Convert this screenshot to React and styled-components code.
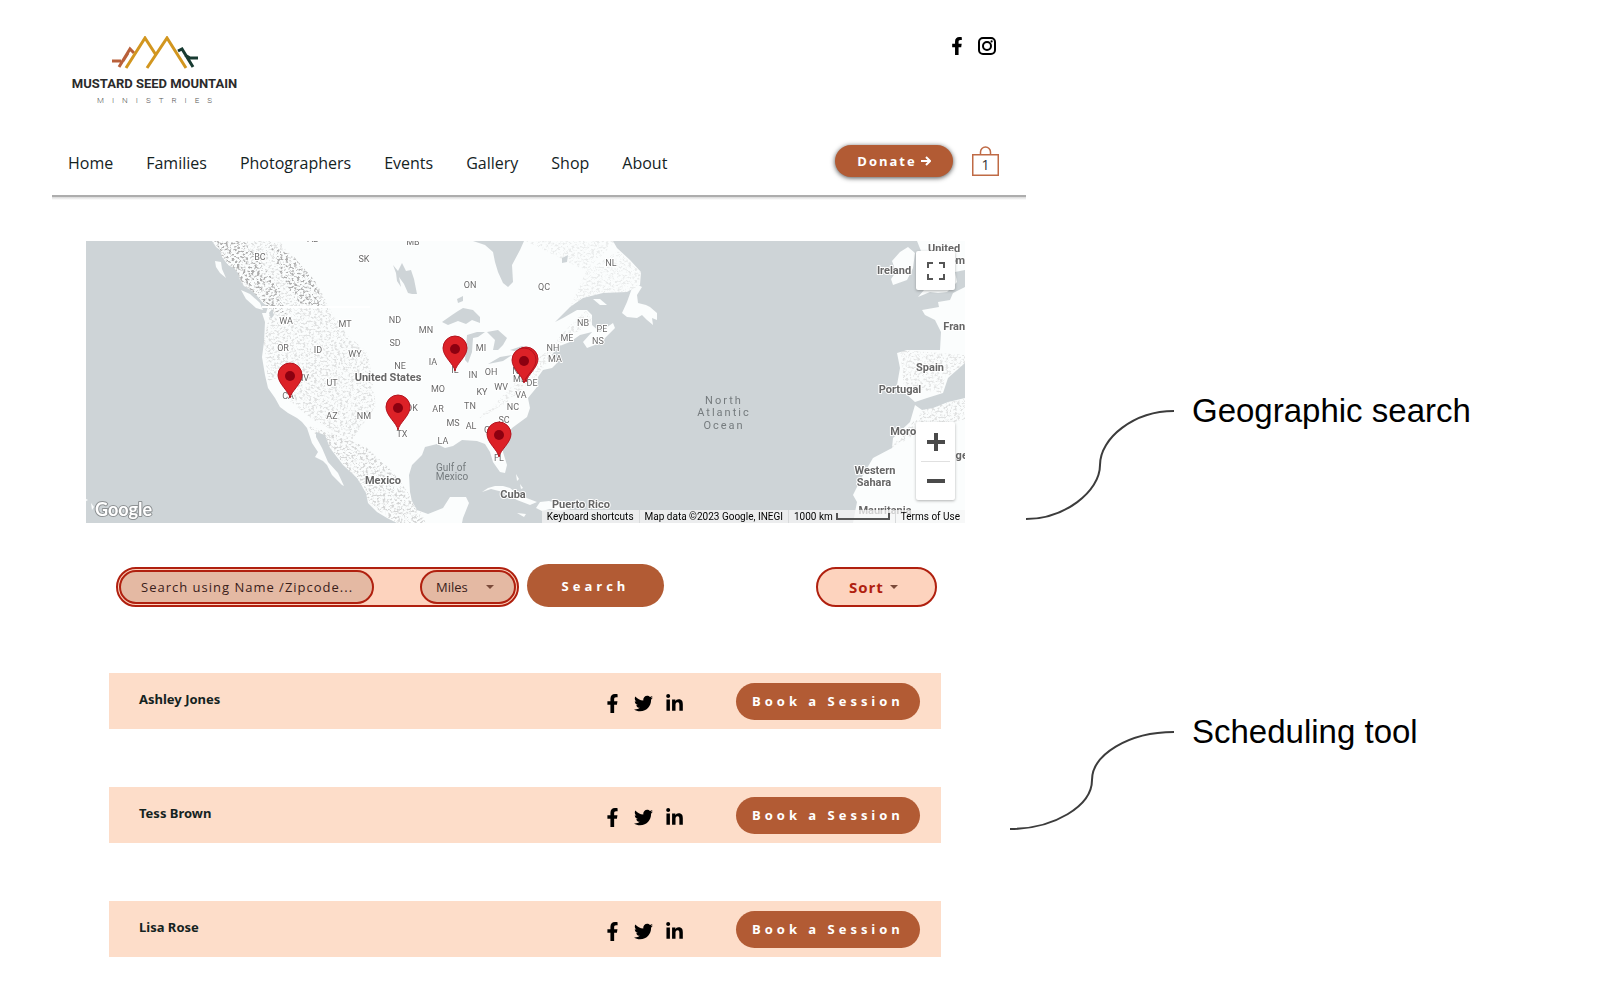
import React from "react";
import styled, { createGlobalStyle } from "styled-components";
import { FaFacebookF, FaTwitter, FaLinkedinIn } from "react-icons/fa";

const colors = {
  rust: "#b25b34",
  red: "#b0200f",
  peach: "#fdd3be",
  peachDark: "#e4b9a3",
  row: "#fdddc9",
  ink: "#14231f",
  mustard: "#d2961f",
  water: "#ced4d7",
  land: "#fbfdfd",
};

const GlobalStyle = createGlobalStyle`
  * {
    box-sizing: border-box;
  }
  body {
    margin: 0;
    background: #fff;
    color: ${colors.ink};
    font-family: "Open Sans", "Noto Sans", sans-serif;
  }
  a {
    color: inherit;
    text-decoration: none;
  }
  button, select, input {
    font-family: inherit;
    margin: 0;
    cursor: pointer;
  }
`;

const Page = styled.div`
  display: grid;
  grid-template-columns: minmax(0, 974fr) minmax(0, 583fr);
  padding-left: 52px;
`;

/* header */

const Header = styled.header`
  padding: 36px 27px 0 16px;
  &:after {
    content: "";
    display: block;
    height: 5px;
    margin: 18px -27px 0 -16px;
    background: linear-gradient(#adadad 0 2px, #d8d8d8 2px, #fff);
  }
`;

const HeaderTop = styled.div`
  display: flex;
  justify-content: space-between;
  align-items: flex-start;
  height: 68px;
`;

const Logo = styled.a`
  display: flex;
  flex-direction: column;
  align-items: center;
  width: 173px;
  color: #2b2b2b;
  white-space: nowrap;
  svg {
    display: block;
  }
`;

const LogoName = styled.span`
  font-family: Roboto, sans-serif;
  font-size: 13px;
  font-weight: 700;
  line-height: 28px;
`;

const LogoTagline = styled.span`
  font-family: Roboto, sans-serif;
  font-size: 8px;
  font-weight: 300;
  line-height: 6px;
  letter-spacing: 8px;
  padding-left: 8px;
  color: #555;
`;

const Social = styled.div`
  display: flex;
  align-items: center;
  gap: 12px;
  color: #000;
  a {
    display: flex;
  }
`;

const HeaderSocial = styled(Social)`
  padding: 1px 3px 0 0;
`;

const HeaderBottom = styled.div`
  display: flex;
  align-items: center;
  height: 32px;
  margin-top: 41px;
`;

const Nav = styled.nav`
  display: flex;
  flex: 1;
  gap: 33px;
  padding-top: 4px;
  font-size: 16px;
  line-height: 24px;
`;

const PillButton = styled.button`
  display: flex;
  align-items: center;
  justify-content: center;
  flex: none;
  width: ${(props) => props.$width};
  height: ${(props) => props.$height};
  padding: 0;
  border: 0;
  border-radius: 22px;
  background: ${colors.rust};
  color: #fff;
  font-size: 13px;
  font-weight: 700;
  letter-spacing: 4px;
  white-space: nowrap;
`;

const DonateButton = styled(PillButton)`
  gap: 4px;
  letter-spacing: 2px;
  box-shadow: 0 1px 5px rgba(0, 0, 0, 0.7);
`;

const Bag = styled.a`
  display: flex;
  margin-left: 19px;
`;

/* map */

const MapFrame = styled.section`
  position: relative;
  height: 282px;
  margin: 41px 61px 0 34px;
  overflow: hidden;
  background: ${colors.water};
`;

const MapDrawing = styled.svg`
  display: block;
  width: 100%;
  height: 100%;
  font-family: Roboto, sans-serif;
  text {
    text-anchor: middle;
    paint-order: stroke;
    stroke: #fff;
    stroke-width: 2px;
    stroke-linejoin: round;
    fill: #6b6b6b;
    font-size: 9px;
  }
  .country {
    font-size: 11px;
    font-weight: 700;
    fill: #666;
  }
  .sea {
    stroke: none;
    fill: #757b7e;
    font-size: 10px;
  }
  .ocean {
    stroke: none;
    fill: #757b7e;
    font-size: 11px;
    letter-spacing: 2px;
  }
  .google {
    font-family: Lato, sans-serif;
    font-size: 18px;
    font-weight: 700;
    fill: #fff;
    stroke: #8d9193;
    text-anchor: start;
  }
`;

const MapControl = styled.div`
  position: absolute;
  right: 10px;
  ${(props) => (props.$top ? "top: 10px;" : "bottom: 23px;")}
  width: 39px;
  padding: 0 5px;
  background: #fff;
  border-radius: 2px;
  box-shadow: 0 1px 3px rgba(0, 0, 0, 0.3);
`;

const MapButton = styled.button`
  display: flex;
  align-items: center;
  justify-content: center;
  width: 29px;
  height: 39px;
  padding: 0;
  border: 0;
  background: none;
  & + & {
    border-top: 1px solid #e0e0e0;
  }
`;

const Attribution = styled.div`
  position: absolute;
  right: 0;
  bottom: 0;
  display: flex;
  height: 13px;
  background: rgba(245, 245, 245, 0.75);
  font-family: Roboto, sans-serif;
  font-size: 10px;
  line-height: 14px;
  color: #000;
  white-space: nowrap;
  > * {
    display: flex;
    align-items: center;
    gap: 3px;
    padding: 0 5px;
  }
  > * + * {
    border-left: 1px solid #d8dadb;
  }
`;

/* search */

const SearchBar = styled.form`
  display: flex;
  align-items: flex-end;
  margin: 41px 89px 0 64px;
`;

const SearchField = styled.div`
  display: flex;
  justify-content: space-between;
  width: 403px;
  height: 40px;
  padding: 1px;
  margin-right: 8px;
  border: 2px solid ${colors.red};
  border-radius: 20px;
  background: ${colors.peach};
`;

const SearchInput = styled.input`
  width: 255px;
  height: 34px;
  padding: 0 20px;
  border: 2px solid ${colors.red};
  border-radius: 17px;
  background: ${colors.peachDark};
  font-size: 13px;
  letter-spacing: 1px;
  &::placeholder {
    color: #3a201a;
    opacity: 1;
  }
`;

const SelectBox = styled.div`
  position: relative;
  flex: none;
  width: ${(props) => props.$width};
  svg {
    position: absolute;
    top: 50%;
    right: ${(props) => props.$caretRight};
    margin-top: -2px;
    pointer-events: none;
  }
`;

const Select = styled.select`
  appearance: none;
  display: block;
  width: 100%;
  height: 34px;
  padding: 0 0 0 14px;
  border: 2px solid ${colors.red};
  border-radius: 17px;
  background: ${colors.peachDark};
  color: #3a201a;
  font-size: 13px;
`;

const SortSelect = styled(Select)`
  height: 40px;
  padding: 0 0 0 31px;
  border-radius: 20px;
  background: ${colors.peach};
  color: ${colors.red};
  font-size: 15px;
  font-weight: 700;
  letter-spacing: 1px;
`;

const Spacer = styled.div`
  flex: 1;
`;

/* photographers */

const List = styled.ul`
  display: flex;
  flex-direction: column;
  gap: 58px;
  margin: 66px 85px 38px 57px;
  padding: 0;
  list-style: none;
`;

const Row = styled.li`
  display: flex;
  align-items: center;
  height: 56px;
  padding: 0 21px 0 30px;
  background: ${colors.row};
`;

const Name = styled.h3`
  flex: 1;
  margin: 0;
  padding-bottom: 4px;
  font-family: "Noto Sans", sans-serif;
  font-size: 13px;
  line-height: 20px;
`;

const RowSocial = styled(Social)`
  margin-right: 52px;
  padding-top: 4px;
`;

/* callouts */

const Callouts = styled.aside`
  display: flex;
  flex-direction: column;
  gap: 192px;
  padding-top: 391px;
`;

const Callout = styled.div`
  display: flex;
  align-items: flex-start;
  gap: 18px;
  margin-left: ${(props) => (props.$wide ? "-16px" : "0")};
  svg {
    flex: none;
    margin-top: 19px;
  }
`;

const CalloutText = styled.h2`
  margin: 0;
  color: #000;
  font-family: "Liberation Sans", sans-serif;
  font-size: 33px;
  font-weight: 400;
  line-height: 40px;
  white-space: nowrap;
`;

const states = [
  ["BC", 174, 19], ["SK", 278, 21], ["MB", 327, 4], ["AB", 227, 1], ["WA", 200, 83],
  ["MT", 259, 86], ["OR", 197, 110], ["ID", 232, 112], ["WY", 269, 116],
  ["NV", 217, 140], ["UT", 246, 145], ["CA", 202, 158], ["AZ", 246, 178],
  ["NM", 278, 178], ["ND", 309, 82], ["SD", 309, 105], ["NE", 314, 128],
  ["MN", 340, 92], ["IA", 347, 124], ["MO", 352, 151], ["OK", 326, 170],
  ["TX", 316, 196], ["AR", 352, 171], ["MS", 367, 185], ["AL", 385, 188],
  ["LA", 357, 203], ["IL", 369, 132], ["IN", 387, 137], ["OH", 405, 134],
  ["MI", 395, 110], ["KY", 396, 154], ["TN", 384, 168], ["WV", 415, 149],
  ["VA", 435, 157], ["NC", 427, 169], ["SC", 418, 182], ["GA", 404, 192],
  ["FL", 413, 220], ["MD", 434, 141], ["DE", 446, 145], ["MA", 469, 121],
  ["NH", 467, 110], ["ME", 481, 100], ["NB", 497, 85], ["PE", 516, 91],
  ["NS", 512, 103], ["ON", 384, 47], ["QC", 458, 49], ["NL", 525, 25],
  ["NY", 432, 133],
];

const countries = [
  ["United States", 302, 140], ["Mexico", 297, 243], ["Cuba", 427, 257],
  ["Puerto Rico", 495, 267], ["Ireland", 808, 33], ["United", 858, 11],
  ["Kingdom", 857, 23], ["France", 874, 89], ["Spain", 844, 130],
  ["Portugal", 814, 152], ["Morocco", 826, 194], ["Algeria", 877, 218],
  ["Western", 789, 233], ["Sahara", 788, 245], ["Mauritania", 799, 273],
];

const pins = [
  [204, 157],
  [369, 130],
  [312, 189],
  [413, 216],
  [440, 141],
  [438, 142],
];

const photographers = ["Ashley Jones", "Tess Brown", "Lisa Rose"];

const americas =
  "M126 0 L130 6 134 9 136 16 142 24 148 27 152 32 154 39 158 45 166 50 172 56 176 61 182 66 180 72 176 72 179 81 178 101 176 116 179 134 182 147 189 157 194 166 202 172 211 177 216 181 221 187 226 202 232 211 229 216 237 220 241 224 246 234 256 244 258 245 252 232 242 221 236 207 230 196 230 191 239 194 244 207 257 224 271 237 280 252 282 262 291 271 301 277 311 282 L376 282 377 277 383 262 380 256 364 256 357 267 342 273 331 269 326 260 324 251 323 234 326 224 336 214 339 206 351 203 359 207 367 205 376 199 391 200 399 203 404 211 407 221 414 231 419 232 421 224 417 211 417 201 426 187 441 176 444 167 442 157 451 146 452 136 457 129 466 127 471 122 466 114 471 106 484 101 494 94 506 91 497 101 501 107 514 102 529 87 527 82 514 91 506 84 506 74 501 69 491 69 477 77 469 81 484 66 497 57 517 52 541 51 554 44 555 31 544 19 531 7 527 0 Z";

const europe =
  "M879 46 L867 52 864 59 852 61 853 66 836 69 839 74 849 79 855 91 854 109 837 109 821 109 811 112 814 127 811 144 819 152 829 161 841 157 857 152 862 137 879 122 Z";

const africa =
  "M829 164 L836 169 847 167 862 161 879 157 V282 H767 L771 261 767 254 777 234 787 217 806 207 807 197 824 181 Z";

function Pin({ x, y }) {
  return (
    <g transform={`translate(${x} ${y})`}>
      <path
        d="M0 0 C-1 -7 -12 -14 -12 -23 A12 12 0 0 1 12 -23 C12 -14 1 -7 0 0 Z"
        fill="#dc2127"
        stroke="#b3121d"
      />
      <circle cy="-22" r="5" fill="#8c0010" />
    </g>
  );
}

function Map() {
  return (
    <MapFrame aria-label="Map of photographers">
      <MapDrawing viewBox="0 0 879 282" preserveAspectRatio="xMidYMid slice">
        <defs>
          <filter id="relief" x="0" y="0" width="100%" height="100%">
            <feTurbulence type="fractalNoise" baseFrequency="0.35 0.5" numOctaves="4" seed="4" />
            <feColorMatrix values="0 0 0 0 0.42  0 0 0 0 0.42  0 0 0 0 0.42  5 0 0 0 -2.4" />
            <feComposite in2="SourceGraphic" operator="in" />
          </filter>
          <clipPath id="land">
            <path d={`${americas} ${europe} ${africa}`} />
          </clipPath>
        </defs>
        <g fill={colors.land}>
          <path d={americas} />
          <path d={europe} />
          <path d={africa} />
          <path d="M129 20 L135 21 136 28 140 37 134 32 130 26 Z" />
          <path d="M155 49 L164 53 174 62 177 69 170 67 160 58 Z" />
          <path d="M552 44 L546 47 541 61 536 72 541 76 551 77 556 74 561 79 567 84 566 77 571 79 571 72 564 66 560 64 552 62 551 54 556 46 Z" />
          <path d="M507 58 L514 58 521 64 514 64 Z" />
          <path d="M396 251 L402 247 409 245 417 245 424 247 430 252 438 256 451 261 444 264 431 259 417 251 405 248 Z" />
          <path d="M454 261 L463 260 474 263 484 268 474 270 464 268 456 270 450 267 Z M431 272 L440 273 438 276 Z" />
          <path d="M430 233 L433 238 431 240 Z M434 243 L437 247 435 248 Z" />
          <path d="M806 20 L814 11 822 6 829 12 827 27 821 39 807 44 805 38 810 31 Z" />
          <path d="M831 0 L835 10 842 17 836 28 844 40 838 49 832 56 844 51 852 52 861 51 871 41 869 31 879 29 V0 Z" />
          <path d="M5 262 L8 266 6 269 Z M0 258 L2 259 0 260 Z" />
        </g>
        <g clipPath="url(#land)">
          <g filter="url(#relief)">
            <path d="M126 0 H193 L213 22 234 48 246 72 262 95 282 112 290 165 265 200 226 178 204 160 205 132 182 140 178 100 184 70 152 36 Z" opacity="0.35" />
            <path d="M126 0 H158 L176 24 194 48 200 74 176 66 148 36 Z M184 4 L208 16 229 40 238 66 212 62 196 36 Z" />
            <path d="M222 185 L246 192 280 206 306 230 330 262 340 282 H308 L284 262 262 228 Z" opacity="0.5" />
            <path d="M386 182 L410 162 440 130 466 104 488 80 500 70 508 80 480 98 448 138 420 162 Z" opacity="0.25" />
            <path d="M484 66 L500 30 532 10 556 32 550 48 Z M440 0 H530 L500 30 Z" opacity="0.2" />
            <path d="M814 109 L879 114 V126 L860 136 855 152 818 146 Z" opacity="0.3" />
            <path d="M804 208 L828 180 840 166 879 158 V178 L836 190 Z" opacity="0.35" />
          </g>
        </g>
        <g fill={colors.water}>
          <path d="M387 0 L399 4 407 11 409 21 412 31 417 42 422 46 427 41 426 24 434 9 438 0 Z" />
          <path d="M356 81 L366 74 372 70 377 67 387 69 394 76 394 82 386 79 380 83 372 80 362 84 Z" />
          <path d="M381 94 L391 91 399 91 392 96 387 97 386 111 382 122 379 119 Z" />
          <path d="M401 91 L412 89 421 97 417 104 412 109 407 109 409 99 Z" />
          <path d="M402 123 L414 116 426 114 417 120 Z M424 109 L436 105 442 107 432 111 Z" />
          <path d="M307 24 L310 32 311 40 315 46 313 36 318 43 322 52 326 53 331 53 328 38 325 29 320 30 316 22 312 30 Z" />
          <path d="M186 68 L188 74 185 78 183 72 Z M371 58 L377 55 377 60 372 62 Z M476 17 L482 14 481 21 476 22 Z" />
        </g>
        <path d="M176 66 H284" stroke="#fff" strokeWidth="2" />
        {states.map(([name, x, y]) => (
          <text key={name} x={x} y={y}>{name}</text>
        ))}
        {countries.map(([name, x, y]) => (
          <text key={name} className="country" x={x} y={y}>{name}</text>
        ))}
        <text className="sea" x="365" y="230">Gulf of</text>
        <text className="sea" x="366" y="239">Mexico</text>
        <text className="ocean" x="638" y="163">North</text>
        <text className="ocean" x="638" y="175">Atlantic</text>
        <text className="ocean" x="638" y="188">Ocean</text>
        <text className="google" x="9" y="275">Google</text>
        {pins.map(([x, y]) => (
          <Pin key={x} x={x} y={y} />
        ))}
      </MapDrawing>
      <MapControl $top>
        <MapButton type="button" aria-label="Toggle fullscreen view">
          <svg width="18" height="18" fill="none" stroke="#555" strokeWidth="2">
            <path d="M1 6 V1 H6 M12 1 H17 V6 M17 12 V17 H12 M6 17 H1 V12" />
          </svg>
        </MapButton>
      </MapControl>
      <MapControl>
        <MapButton type="button" aria-label="Zoom in">
          <svg width="18" height="18" stroke="#4a4a4a" strokeWidth="4">
            <path d="M0 9 H18 M9 0 V18" />
          </svg>
        </MapButton>
        <MapButton type="button" aria-label="Zoom out">
          <svg width="18" height="18" stroke="#4a4a4a" strokeWidth="4">
            <path d="M0 9 H18" />
          </svg>
        </MapButton>
      </MapControl>
      <Attribution>
        <a href="#shortcuts">Keyboard shortcuts</a>
        <span>Map data ©2023 Google, INEGI</span>
        <span>
          1000 km
          <svg width="54" height="7" fill="none" stroke="#555" strokeWidth="2">
            <path d="M1 0 V6 H53 V0" />
          </svg>
        </span>
        <a href="#terms">Terms of Use</a>
      </Attribution>
    </MapFrame>
  );
}

function Caret() {
  return (
    <svg width="8" height="4" fill="#7a4a3a">
      <path d="M0 0 H8 L4 4 Z" />
    </svg>
  );
}

function SiteHeader() {
  return (
    <Header>
      <HeaderTop>
        <Logo href="#home">
          <svg width="86" height="34" viewBox="0 0 86 34" fill="none" strokeWidth="3">
            <path d="M0 25 H9 M7 31 L18 13 L22 17 M11 25 L16 17" stroke="#b9603a" />
            <path d="M66 15 L70 13 L81 31 M73 19 L78 22 H86" stroke="#173a31" />
            <path d="M14 32 L33 2 L44 19 M35 32 L55 2 L74 32" stroke={colors.mustard} />
          </svg>
          <LogoName>MUSTARD SEED MOUNTAIN</LogoName>
          <LogoTagline>MINISTRIES</LogoTagline>
        </Logo>
        <HeaderSocial>
          <a href="#facebook" aria-label="Facebook"><FaFacebookF size={18} /></a>
          <a href="#instagram" aria-label="Instagram">
            <svg width="18" height="18" fill="none" stroke="#000" strokeWidth="2">
              <rect x="1" y="1" width="16" height="16" rx="4" />
              <circle cx="9" cy="9" r="4" />
              <circle cx="13.6" cy="4.4" r="1.1" fill="#000" stroke="none" />
            </svg>
          </a>
        </HeaderSocial>
      </HeaderTop>
      <HeaderBottom>
        <Nav>
          {["Home", "Families", "Photographers", "Events", "Gallery", "Shop", "About"].map((item) => (
            <a key={item} href={`#${item.toLowerCase()}`}>{item}</a>
          ))}
        </Nav>
        <DonateButton type="button" $width="118px" $height="32px">
          Donate
          <svg width="10" height="10" fill="none" stroke="#fff" strokeWidth="2">
            <path d="M0 5 H9 M5 1 L9 5 L5 9" />
          </svg>
        </DonateButton>
        <Bag href="#cart" aria-label="Cart, 1 item">
          <svg width="27" height="30" fill="none" stroke="#bf6a45">
            <rect x="0.75" y="8.75" width="25.5" height="20.5" strokeWidth="1.5" />
            <path d="M8.5 8 V6 A5 5 0 0 1 18.5 6 V8" strokeWidth="1.5" />
            <text x="13.5" y="24" textAnchor="middle" fontSize="14" fill="#333" stroke="none">1</text>
          </svg>
        </Bag>
      </HeaderBottom>
    </Header>
  );
}

function App() {
  return (
    <>
      <GlobalStyle />
      <Page>
        <main>
          <SiteHeader />
          <Map />
          <SearchBar onSubmit={(e) => e.preventDefault()}>
            <SearchField>
              <SearchInput
                type="text"
                aria-label="Search using name or zipcode"
                placeholder="Search using Name /Zipcode..."
              />
              <SelectBox $width="96px" $caretRight="22px">
                <Select aria-label="Distance">
                  <option>Miles</option>
                </Select>
                <Caret />
              </SelectBox>
            </SearchField>
            <PillButton type="submit" $width="137px" $height="43px">Search</PillButton>
            <Spacer />
            <SelectBox $width="121px" $caretRight="39px">
              <SortSelect aria-label="Sort">
                <option>Sort</option>
              </SortSelect>
              <Caret />
            </SelectBox>
          </SearchBar>
          <List>
            {photographers.map((name) => (
              <Row key={name}>
                <Name>{name}</Name>
                <RowSocial>
                  <a href="#facebook" aria-label="Facebook"><FaFacebookF size={19} /></a>
                  <a href="#twitter" aria-label="Twitter"><FaTwitter size={19} /></a>
                  <a href="#linkedin" aria-label="LinkedIn"><FaLinkedinIn size={19} /></a>
                </RowSocial>
                <PillButton type="button" $width="184px" $height="37px">Book a Session</PillButton>
              </Row>
            ))}
          </List>
        </main>
        <Callouts>
          <Callout>
            <svg width="148" height="110" fill="none" stroke="#3c3c3c" strokeWidth="2">
              <path d="M148 1 C108 1 74 28 74 55 C74 82 38 109 0 109" />
            </svg>
            <CalloutText>Geographic search</CalloutText>
          </Callout>
          <Callout $wide>
            <svg width="164" height="100" fill="none" stroke="#3c3c3c" strokeWidth="2">
              <path d="M164 1 C118 1 82 24 82 49 C82 75 44 98 0 98" />
            </svg>
            <CalloutText>Scheduling tool</CalloutText>
          </Callout>
        </Callouts>
      </Page>
    </>
  );
}

export default App;
